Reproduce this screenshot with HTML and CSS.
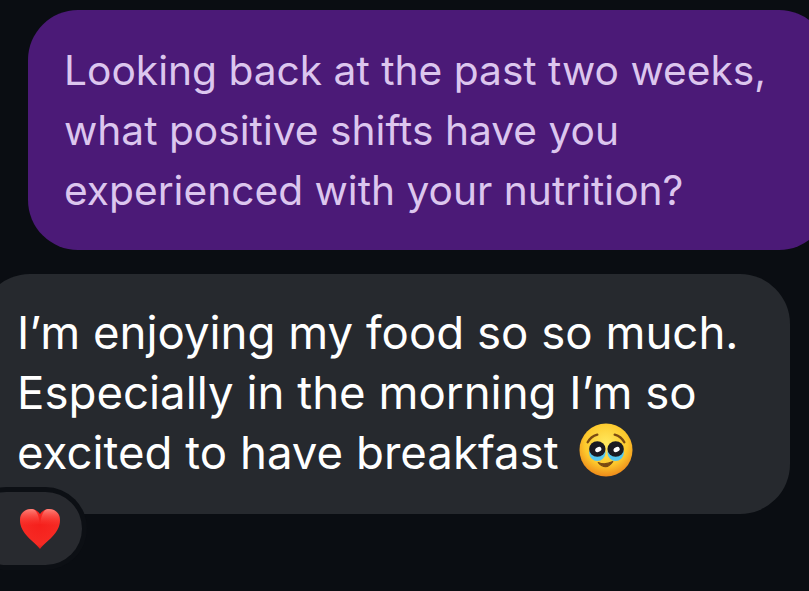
FILE: index.html
```html
<!DOCTYPE html>
<html lang="en">
<head>
    <meta charset="UTF-8">
    <meta name="viewport" content="width=device-width, initial-scale=1.0">
    <title>Chat</title>
    <link rel="stylesheet" href="styles.css">
</head>
<body>
    <div class="chat">
        <div class="bubble coach">
            <p>Looking back at the past two weeks,<br>what positive shifts have you<br>experienced with your nutrition?</p>
        </div>
        <div class="bubble client">
            <p>I’m enjoying my food so so much.<br>Especially in the morning I’m so<br>excited to have breakfast
                <svg class="emoji" viewBox="0 0 56 56" aria-label="pleading face">
                    <defs>
                        <radialGradient id="face" cx="50%" cy="38%" r="62%">
                            <stop offset="0" stop-color="#ffe95f"/>
                            <stop offset="0.65" stop-color="#fdc92c"/>
                            <stop offset="1" stop-color="#ee8a1a"/>
                        </radialGradient>
                    </defs>
                    <circle cx="28" cy="28" r="27.5" fill="url(#face)"/>
                    <path d="M9 20 Q12 14 19 12" fill="none" stroke="#7a4a12" stroke-width="2.4" stroke-linecap="round"/>
                    <path d="M37 12 Q44 14 47 20" fill="none" stroke="#7a4a12" stroke-width="2.4" stroke-linecap="round"/>
                    <ellipse cx="19" cy="30.5" rx="8.5" ry="9" fill="#55c6ee"/>
                    <ellipse cx="38" cy="30.5" rx="8.5" ry="9" fill="#55c6ee"/>
                    <ellipse cx="19" cy="27" rx="8.5" ry="8" fill="#1a1a22"/>
                    <ellipse cx="38" cy="27" rx="8.5" ry="8" fill="#1a1a22"/>
                    <ellipse cx="20" cy="27.5" rx="3.4" ry="2.4" fill="#fff" transform="rotate(-30 20 27.5)"/>
                    <ellipse cx="39" cy="27.5" rx="3.4" ry="2.4" fill="#fff" transform="rotate(-30 39 27.5)"/>
                    <path d="M20 41 Q27 44 35 40 Q28 50 20 41 Z" fill="#7a4a12" stroke="#7a4a12" stroke-width="1.2" stroke-linejoin="round"/>
                </svg>
            </p>
            <div class="reaction">
                <svg class="heart" viewBox="0 0 42 42" aria-label="heart">
                    <defs>
                        <radialGradient id="red" cx="50%" cy="40%" r="65%">
                            <stop offset="0" stop-color="#f5201c"/>
                            <stop offset="0.75" stop-color="#f62a24"/>
                            <stop offset="1" stop-color="#d01512"/>
                        </radialGradient>
                        <linearGradient id="shine" x1="0" y1="0" x2="0" y2="1">
                            <stop offset="0" stop-color="#ff9a90"/>
                            <stop offset="1" stop-color="#ff3a32" stop-opacity="0"/>
                        </linearGradient>
                    </defs>
                    <path d="M21 41 C15 33 1 26 1 12 C1 5 6 1 12 1 C16 1 19 3 21 6 C23 3 26 1 30 1 C36 1 41 5 41 12 C41 26 27 33 21 41 Z" fill="url(#red)"/>
                    <path d="M21 16 C23 3 26 1 30 1 C36 1 41 5 41 12 C41 15 41 16 40 18 Z M21 16 C19 3 16 1 12 1 C6 1 1 5 1 12 C1 15 1 16 2 18 Z" fill="url(#shine)" opacity="0.8"/>
                </svg>
            </div>
        </div>
    </div>
</body>
</html>
```

FILE: styles.css
```css
*{
   margin:0;
   padding:0;
   box-sizing:border-box;
}
html,body{
   height:100%;
   overflow:hidden;
}
body{
   background-color:#0a0d12;
   font-family:Inter,"Liberation Sans",sans-serif;
}
.chat{
   display:flex;
   flex-direction:column;
   gap:24px;
   padding-top:10px;
}
.bubble{
   height:240px;
   padding:31px 0 0 37px;
   border-radius:50px;
   line-height:60px;
   white-space:nowrap;
}
.coach{
   margin:0 -20px 0 28px;
   padding-left:36px;
   background-color:#4b1a77;
   color:#dcc6ee;
   font-size:40.7px;
}
.client{
   position:relative;
   margin:0 19px 0 -20px;
   padding-top:29px;
   padding-left:37px;
   background-color:#26292e;
   color:#fff;
   font-size:45.6px;
}
.emoji{
   width:54px;
   height:54px;
   margin-left:7px;
   vertical-align:-8px;
}
.reaction{
   position:absolute;
   left:-10px;
   top:218px;
   width:112px;
   height:73px;
   display:flex;
   align-items:center;
   justify-content:center;
   padding-left:28px;
   background-color:#282a2f;
   border-radius:40px;
   box-shadow:0 0 0 5px #0c0f14;
}
.heart{
   width:42px;
   height:42px;
}
```
